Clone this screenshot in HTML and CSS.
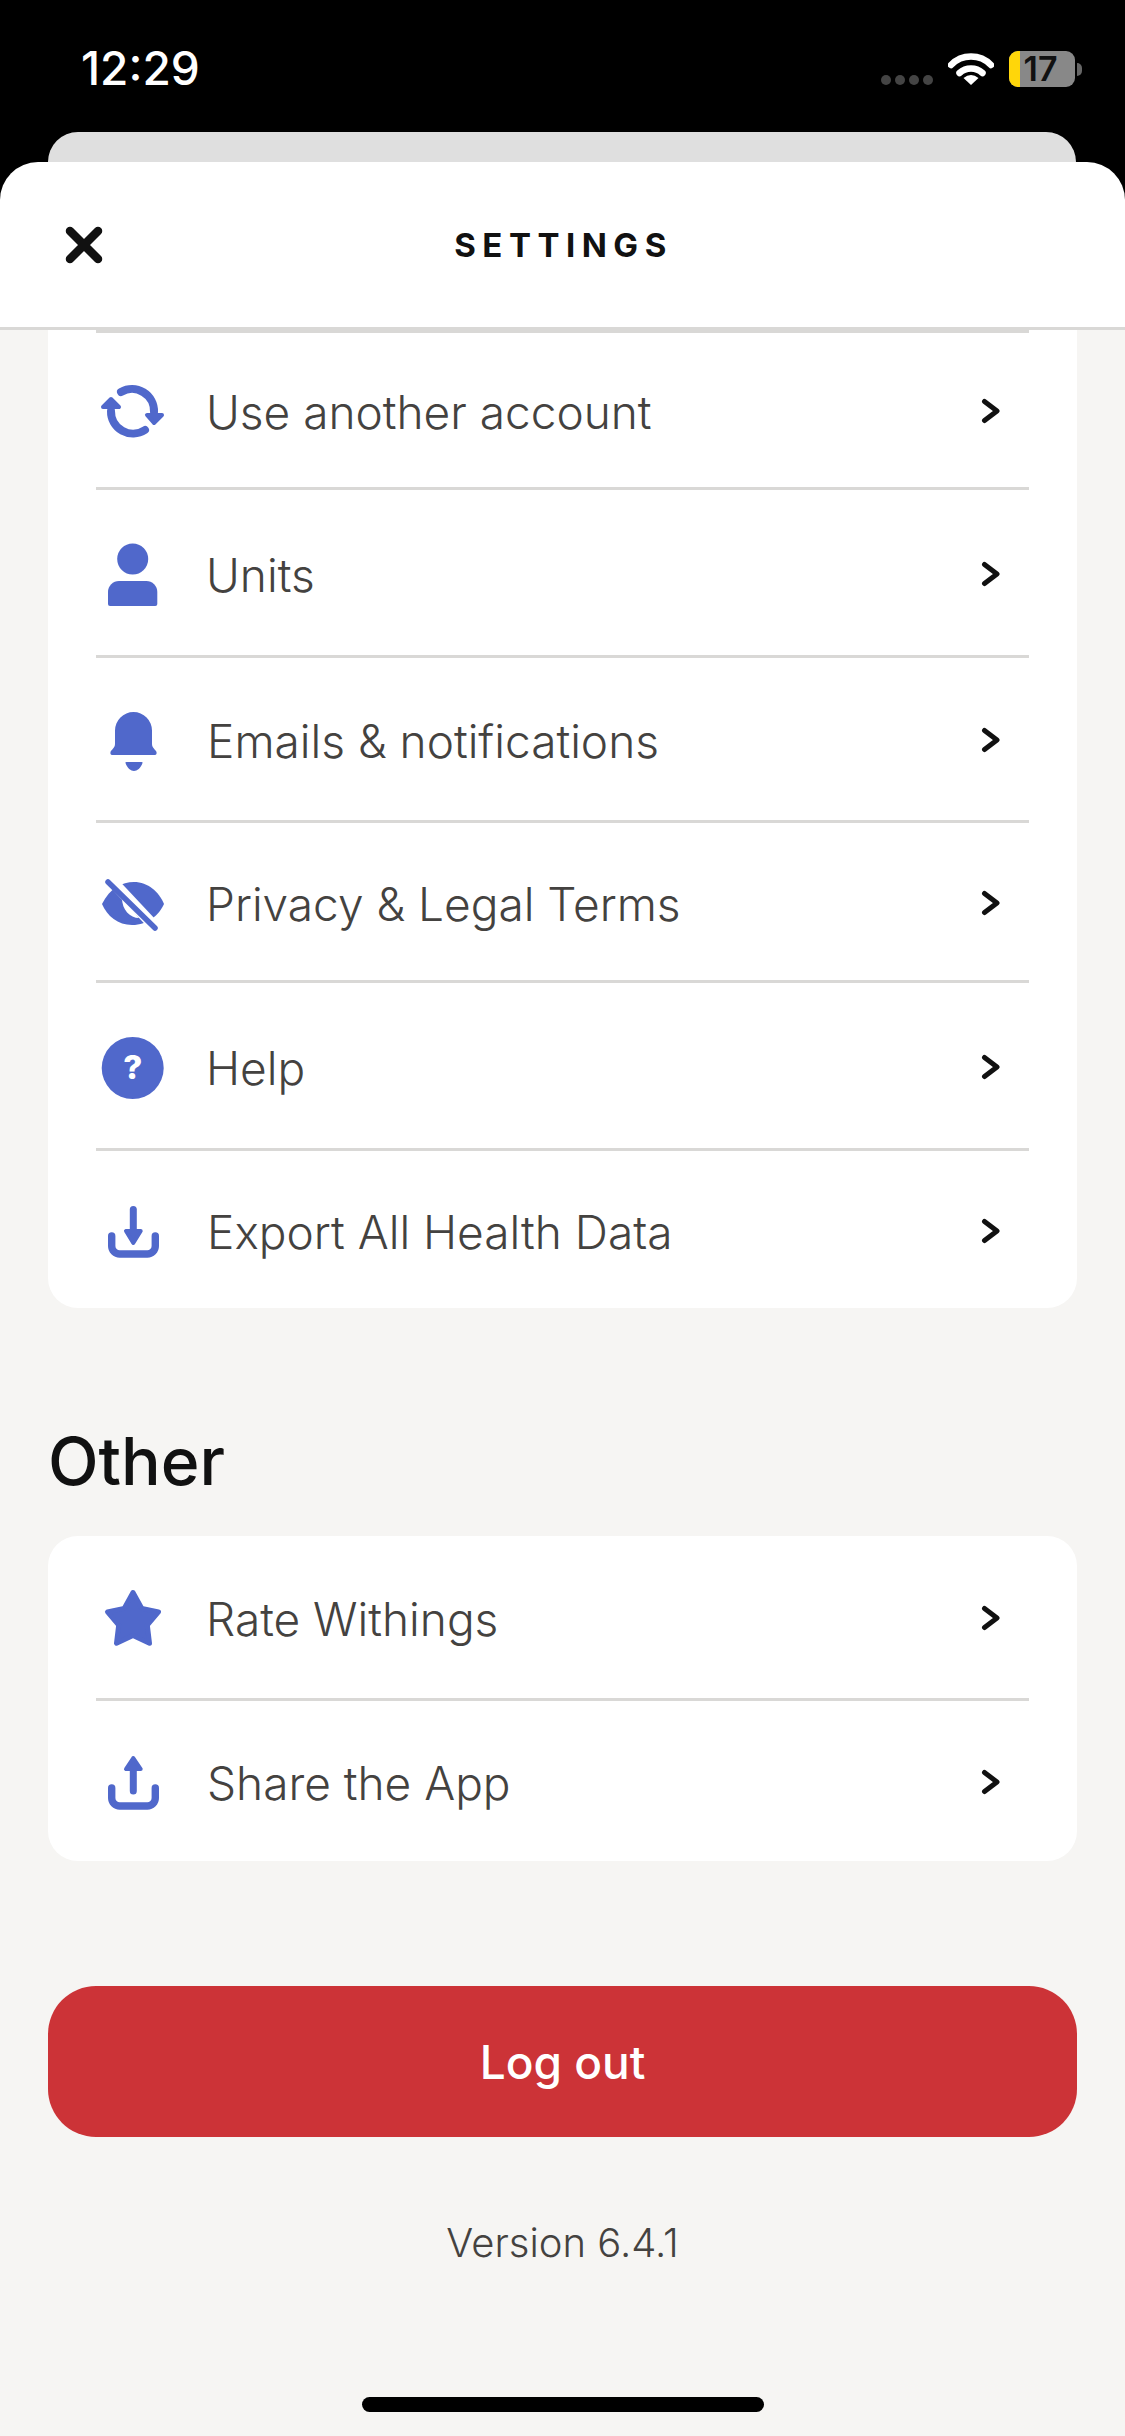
FILE: index.html
```html
<!DOCTYPE html>
<html lang="en">
<head>
    <meta charset="UTF-8">
    <title>Settings</title>
    <link rel="stylesheet" href="styles.css">
</head>
<body>
    <div class="status-bar">
        <span class="time">12:29</span>
        <div class="status-icons">
            <div class="signal"><i></i><i></i><i></i><i></i></div>
            <svg class="wifi" width="46" height="34" viewBox="0 0 46 34">
                <path d="M3 14 A28 28 0 0 1 43 14" fill="none" stroke="#fff" stroke-width="6.5" stroke-linecap="round"/>
                <path d="M11.5 22 A17 17 0 0 1 34.5 22" fill="none" stroke="#fff" stroke-width="6.5" stroke-linecap="round"/>
                <path d="M15.5 27 Q23 21 30.5 27 L23 34 Z" fill="#fff"/>
            </svg>
            <div class="battery">
                <div class="battery-body"><span class="battery-level"></span><span class="battery-text">17</span></div>
                <span class="battery-tip"></span>
            </div>
        </div>
    </div>
    <div class="sheet-behind"></div>
    <header class="sheet-header">
        <svg class="close-icon" width="38" height="38" viewBox="0 0 38 38">
            <path d="M5 5 L33 33 M33 5 L5 33" stroke="#111" stroke-width="8.5" stroke-linecap="round"/>
        </svg>
        <h1>SETTINGS</h1>
    </header>
    <main class="content">
        <section class="card">
            <div class="row row-short">
                <svg class="icon" viewBox="0 0 72 72">
                    <path d="M25 16 A22 22 0 0 1 58 36" class="line" stroke-width="8"/>
                    <path d="M15 35 A22 22 0 0 0 49 54" class="line" stroke-width="8"/>
                    <path d="M7 31 L15 23 L23 31 Z" class="solid" stroke-width="4"/>
                    <path d="M51 39 L66 39 L58 47 Z" class="solid" stroke-width="4"/>
                </svg>
                <span class="label">Use another account</span>
                <svg class="chevron" viewBox="0 0 20 26"><path d="M3.5 3.5 L16 13 L3.5 22.5"/></svg>
            </div>
            <div class="row row-tall">
                <svg class="icon" viewBox="0 0 72 72">
                    <circle cx="36.7" cy="20" r="15.5" class="fill"/>
                    <path d="M12 53 A11 11 0 0 1 23 42 H50.3 A11 11 0 0 1 61.3 53 V65 A2 2 0 0 1 59.3 67 H14 A2 2 0 0 1 12 65 Z" class="fill"/>
                </svg>
                <span class="label">Units</span>
                <svg class="chevron" viewBox="0 0 20 26"><path d="M3.5 3.5 L16 13 L3.5 22.5"/></svg>
            </div>
            <div class="row row-mid">
                <svg class="icon" viewBox="0 0 72 72">
                    <path d="M19 25.5 A18.5 18.5 0 0 1 56 25.5 V39 C56 43 60 45 60.5 47 C61 49 60 50 59 50 H16 C15 50 14 49 14.5 47 C15 45 19 43 19 39 Z" class="fill"/>
                    <path d="M29.5 58 Q29 57 30.5 57 H45.5 Q47 57 46.5 58 C45 63 41 66 38 66 C35 66 31 63 29.5 58 Z" class="fill"/>
                </svg>
                <span class="label label-nudge">Emails &amp; notifications</span>
                <svg class="chevron" viewBox="0 0 20 26"><path d="M3.5 3.5 L16 13 L3.5 22.5"/></svg>
            </div>
            <div class="row">
                <svg class="icon" viewBox="0 0 72 72">
                    <path d="M6 36 C14 20 26 14 38 14 C52 14 63 24 68 36 C63 47 52 57 36 57 C22 57 11 48 6 36 Z" class="fill"/>
                    <path d="M26 30 L43 50 C34 50 26 42 26 30 Z" fill="#fff"/>
                    <path d="M15 12 L59 59" stroke="#fff" stroke-width="11" fill="none"/>
                    <path d="M12 14 L59 60" class="line" stroke-width="5.5"/>
                </svg>
                <span class="label">Privacy &amp; Legal Terms</span>
                <svg class="chevron" viewBox="0 0 20 26"><path d="M3.5 3.5 L16 13 L3.5 22.5"/></svg>
            </div>
            <div class="row row-tall">
                <svg class="icon" viewBox="0 0 72 72">
                    <circle cx="36.7" cy="36" r="31" class="fill"/>
                    <text x="36.7" y="47" class="help-mark">?</text>
                </svg>
                <span class="label">Help</span>
                <svg class="chevron" viewBox="0 0 20 26"><path d="M3.5 3.5 L16 13 L3.5 22.5"/></svg>
            </div>
            <div class="row">
                <svg class="icon" viewBox="0 0 72 72">
                    <path d="M15.7 40 V50 A8 8 0 0 0 23.7 58 H51.3 A8 8 0 0 0 59.3 50 V40" class="line" stroke-width="7.4"/>
                    <path d="M37.3 13.5 V36" class="line" stroke-width="7"/>
                    <path d="M30 35 H44.7 L37.3 47 Z" class="solid" stroke-width="4"/>
                </svg>
                <span class="label label-nudge">Export All Health Data</span>
                <svg class="chevron" viewBox="0 0 20 26"><path d="M3.5 3.5 L16 13 L3.5 22.5"/></svg>
            </div>
        </section>

        <h2>Other</h2>

        <section class="card card-round">
            <div class="row row-first">
                <svg class="icon" viewBox="0 0 72 72">
                    <path d="M37 9.5 L45.8 25.4 L62.5 28.9 L51.3 42.1 L53.5 60.2 L37 52.5 L20.5 60.2 L22.7 42.1 L11.5 28.9 L28.2 25.4 Z" class="solid" stroke-width="5"/>
                </svg>
                <span class="label">Rate Withings</span>
                <svg class="chevron" viewBox="0 0 20 26"><path d="M3.5 3.5 L16 13 L3.5 22.5"/></svg>
            </div>
            <div class="row row-last">
                <svg class="icon" viewBox="0 0 72 72">
                    <path d="M15.7 41 V51 A8 8 0 0 0 23.7 59 H51.3 A8 8 0 0 0 59.3 51 V41" class="line" stroke-width="7.4"/>
                    <path d="M37.3 22 V44" class="line" stroke-width="7"/>
                    <path d="M30 22 H44.7 L37.3 11 Z" class="solid" stroke-width="4"/>
                </svg>
                <span class="label label-nudge">Share the App</span>
                <svg class="chevron" viewBox="0 0 20 26"><path d="M3.5 3.5 L16 13 L3.5 22.5"/></svg>
            </div>
        </section>

        <button class="logout">Log out</button>
        <p class="version">Version 6.4.1</p>
        <div class="home-bar"></div>
    </main>
</body>
</html>
```

FILE: styles.css
```css
html, body {
    margin: 0;
    padding: 0;
    background: #000;
    font-family: 'Inter', 'Liberation Sans', sans-serif;
}

body {
    width: 1125px;
    height: 2436px;
    overflow: hidden;
}

.status-bar {
    height: 132px;
    box-sizing: border-box;
    padding: 0 43px 0 81px;
    display: flex;
    justify-content: space-between;
    align-items: flex-start;
    color: #fff;
}

.time {
    margin-top: 42px;
    font-size: 46px;
    line-height: 52px;
    font-weight: 500;
}

.status-icons {
    margin-top: 51px;
    display: flex;
    align-items: flex-start;
}

.signal {
    margin: 24px 15px 0 0;
    display: flex;
    gap: 4px;
}

.signal i {
    width: 10px;
    height: 10px;
    border-radius: 50%;
    background: #444;
}

.wifi {
    margin-right: 15px;
}

.battery {
    display: flex;
    align-items: center;
}

.battery-body {
    position: relative;
    width: 66px;
    height: 36px;
    border-radius: 9px;
    background: #888;
    text-align: center;
    color: #111;
    font-size: 34px;
    line-height: 36px;
    font-weight: 600;
}

.battery-level {
    position: absolute;
    left: 0;
    top: 0;
    bottom: 0;
    width: 11px;
    border-radius: 9px 0 0 9px;
    background: #ffd60a;
}

.battery-text {
    position: relative;
    margin-right: 3px;
}

.battery-tip {
    width: 5px;
    height: 13px;
    margin-left: 2px;
    border-radius: 0 6px 6px 0;
    background: #666;
}

.sheet-behind {
    height: 30px;
    margin: 0 49px 0 48px;
    border-radius: 30px 30px 0 0;
    background: #dfdfdf;
}

.sheet-header {
    height: 165px;
    box-sizing: content-box;
    border-bottom: 3px solid #d9d8d6;
    border-radius: 38px 38px 0 0;
    background: #fff;
    display: flex;
    align-items: center;
    justify-content: center;
    position: relative;
}

.close-icon {
    position: absolute;
    left: 65px;
    top: 64px;
}

h1 {
    margin: 0 0 0 2px;
    font-size: 33px;
    font-weight: 700;
    letter-spacing: 6.5px;
    color: #111;
}

.content {
    height: 2106px;
    box-sizing: border-box;
    padding: 0 48px;
    background: #f6f5f3;
}

.card {
    box-sizing: border-box;
    padding: 0 48px;
    border-radius: 0 0 30px 30px;
    background: #fff;
}

.card-round {
    border-radius: 30px;
}

.row {
    height: 160px;
    box-sizing: border-box;
    padding-top: 4px;
    border-top: 3px solid #d9d8d6;
    display: flex;
    align-items: center;
}

.row-short { height: 157px; }
.row-mid { height: 165px; }
.row-tall { height: 168px; }

.row-first {
    height: 162px;
    border-top: none;
}

.row-last { height: 163px; }

.icon {
    width: 72px;
    height: 72px;
    flex: none;
}

.icon .fill { fill: #5068cb; }

.icon .line {
    fill: none;
    stroke: #5068cb;
    stroke-linecap: round;
}

.icon .solid {
    fill: #5068cb;
    stroke: #5068cb;
    stroke-linejoin: round;
}

.help-mark {
    font-size: 33px;
    font-weight: 800;
    fill: #fff;
    text-anchor: middle;
}

.label {
    margin-left: 38px;
    flex: 1;
    font-size: 46px;
    font-weight: 350;
    color: #444240;
}

.label-nudge { margin-left: 39px; }

.chevron {
    width: 20px;
    height: 26px;
    margin: -2px 28px 0 0;
    flex: none;
}

.chevron path {
    fill: none;
    stroke: #111;
    stroke-width: 5;
    stroke-linecap: round;
    stroke-linejoin: round;
}

h2 {
    margin: 0;
    height: 228px;
    box-sizing: border-box;
    padding-top: 115px;
    font-size: 66px;
    line-height: 76px;
    font-weight: 500;
    color: #111;
}

.logout {
    display: block;
    width: 100%;
    height: 151px;
    margin-top: 125px;
    border: none;
    border-radius: 48px;
    background: #cc3337;
    color: #fff;
    font-family: inherit;
    font-size: 46px;
    font-weight: 500;
}

.version {
    margin: 82px 0 0;
    text-align: center;
    font-size: 40px;
    line-height: 48px;
    font-weight: 350;
    color: #444240;
}

.home-bar {
    width: 402px;
    height: 15px;
    margin: 130px auto 0;
    border-radius: 8px;
    background: #000;
}
```
